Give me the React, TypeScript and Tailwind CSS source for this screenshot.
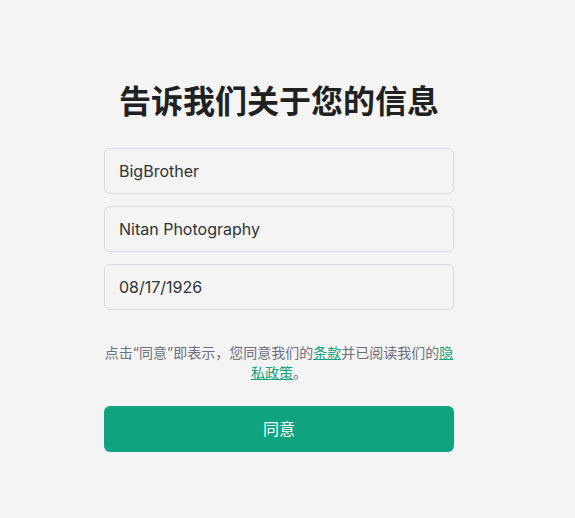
import React from "react";

export default function App() {
  const font = { fontFamily: 'Inter, "Noto Sans CJK SC", sans-serif' };
  return (
    <div className="min-h-[518px] w-full bg-[#f4f4f4] flex" style={font}>
      <div className="w-[350px] ml-[104px] flex flex-col pt-[82px]">
        <h1 className="text-[32px] leading-[40px] font-bold text-[#202123] text-center whitespace-nowrap">
          告诉我们关于您的信息
        </h1>
        <div className="mt-[26px] flex flex-col gap-3">
          {["BigBrother", "Nitan Photography", "08/17/1926"].map((v) => (
            <div
              key={v}
              className="h-[46px] rounded-md border border-[#d9d9e3] bg-[#f4f4f4] flex items-center px-[14px] text-[16px] text-[#2d333a]"
            >
              {v}
            </div>
          ))}
        </div>
        <p className="mt-[33px] text-[14px] leading-[20px] text-[#6e6e80] text-center">
          点击“同意”即表示，您同意我们的
          <a className="text-[#10a37f] underline">条款</a>
          并已阅读我们的
          <a className="text-[#10a37f] underline">隐私政策</a>。
        </p>
        <button className="mt-[23px] h-[46px] rounded-md bg-[#10a37f] text-white text-[16px]">
          同意
        </button>
      </div>
    </div>
  );
}
